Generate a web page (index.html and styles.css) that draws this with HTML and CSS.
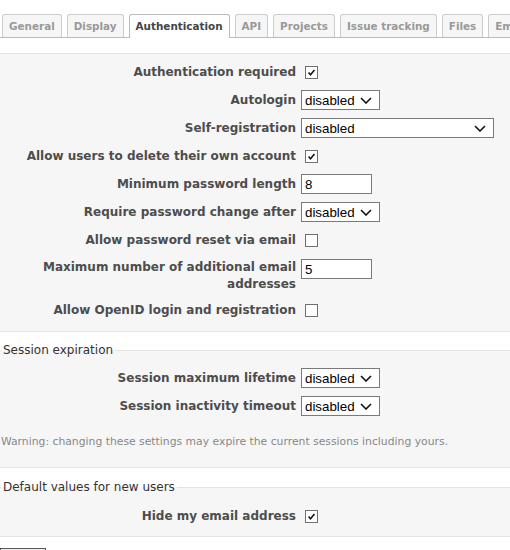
FILE: index.html
```html
<!DOCTYPE html>
<html lang="en">
    <head>
        <title>Settings - Authentication</title>
        <meta charset="utf-8" />
        <link rel="stylesheet" href="styles.css">
    </head>
    <body>
        <div class="tabs">
            <ul>
                <li><a href="#">General</a></li>
                <li><a href="#">Display</a></li>
                <li><a href="#" class="selected">Authentication</a></li>
                <li><a href="#">API</a></li>
                <li><a href="#">Projects</a></li>
                <li><a href="#">Issue tracking</a></li>
                <li><a href="#">Files</a></li>
                <li><a href="#">Email notifications</a></li>
            </ul>
        </div>

        <form class="settings">
            <div class="box">
                <p class="row"><label>Authentication required</label>
                    <span class="cb"><svg viewBox="0 0 13 13"><path d="M3 6.5 L5.3 9.2 L10 3.5" /></svg></span></p>
                <p class="row"><label>Autologin</label>
                    <span class="sel"><select><option>disabled</option></select><svg viewBox="0 0 12 7"><path d="M1 1 L6 6 L11 1" /></svg></span></p>
                <p class="row"><label>Self-registration</label>
                    <span class="sel wide"><select><option>disabled</option></select><svg viewBox="0 0 12 7"><path d="M1 1 L6 6 L11 1" /></svg></span></p>
                <p class="row"><label>Allow users to delete their own account</label>
                    <span class="cb"><svg viewBox="0 0 13 13"><path d="M3 6.5 L5.3 9.2 L10 3.5" /></svg></span></p>
                <p class="row"><label>Minimum password length</label>
                    <input type="text" class="txt" value="8"></p>
                <p class="row"><label>Require password change after</label>
                    <span class="sel"><select><option>disabled</option></select><svg viewBox="0 0 12 7"><path d="M1 1 L6 6 L11 1" /></svg></span></p>
                <p class="row"><label>Allow password reset via email</label>
                    <span class="cb off"></span></p>
                <p class="row tall"><label>Maximum number of additional email addresses</label>
                    <input type="text" class="txt" value="5"></p>
                <p class="row"><label>Allow OpenID login and registration</label>
                    <span class="cb off"></span></p>
            </div>

            <fieldset class="box">
                <legend>Session expiration</legend>
                <p class="row"><label>Session maximum lifetime</label>
                    <span class="sel"><select><option>disabled</option></select><svg viewBox="0 0 12 7"><path d="M1 1 L6 6 L11 1" /></svg></span></p>
                <p class="row"><label>Session inactivity timeout</label>
                    <span class="sel"><select><option>disabled</option></select><svg viewBox="0 0 12 7"><path d="M1 1 L6 6 L11 1" /></svg></span></p>
                <p class="info">Warning: changing these settings may expire the current sessions including yours.</p>
            </fieldset>

            <fieldset class="box last">
                <legend>Default values for new users</legend>
                <p class="row"><label>Hide my email address</label>
                    <span class="cb"><svg viewBox="0 0 13 13"><path d="M3 6.5 L5.3 9.2 L10 3.5" /></svg></span></p>
            </fieldset>

            <input type="button" class="save" value="Save">
        </form>
    </body>
</html>
```

FILE: styles.css
```css
html {
    overflow: hidden;
}
body {
    margin: 0;
    padding: 0;
    font-family: "DejaVu Sans", Verdana, sans-serif;
    font-size: 12px;
    color: #4d4d4d;
    background-color: #fff;
}

/* Tabs */
.tabs {
    padding-top: 14px;
    overflow: hidden;
}
.tabs ul {
    display: flex;
    align-items: flex-end;
    gap: 5px;
    margin: 0;
    padding: 0 0 0 2px;
    list-style: none;
    border-bottom: 1px solid #bbb;
    white-space: nowrap;
}
.tabs li {
    flex: none;
}
.tabs a {
    display: block;
    height: 23px;
    box-sizing: border-box;
    padding: 5px 6px 0 6px;
    line-height: 13px;
    font-size: 10.4px;
    font-weight: bold;
    color: #999;
    text-decoration: none;
    background-color: #f6f6f6;
    border: 1px solid #ccc;
    border-bottom: none;
    border-radius: 3px 3px 0 0;
}
.tabs a.selected {
    height: 24px;
    margin-bottom: -1px;
    color: #444;
    background-color: #fff;
    border-color: #bbb;
}

/* Boxes */
.settings {
    margin-top: 15px;
}
.box {
    margin: 0;
    padding: 4px 0 7px 0;
    background-color: #f6f6f6;
    border: 1px solid #e4e4e4;
    border-left: none;
    border-right: none;
}
fieldset.box {
    min-width: 0;
    margin-top: 10px;
    padding: 6px 0 16px 0;
}
fieldset.last {
    margin-top: 11px;
    padding-top: 7px;
    padding-bottom: 6px;
}
legend {
    margin-left: 1px;
    padding: 0 2px;
    line-height: 16px;
    font-size: 12px;
    color: #333;
}

/* Rows */
.row {
    display: flex;
    align-items: center;
    height: 28px;
    margin: 0;
}
.row.tall {
    align-items: flex-start;
    height: 42px;
    box-sizing: border-box;
    padding-top: 5px;
}
.row label {
    flex: none;
    width: 296px;
    margin-right: 5px;
    text-align: right;
    font-weight: bold;
    line-height: 17px;
}

.cb {
    display: block;
    width: 13px;
    height: 13px;
    box-sizing: border-box;
    margin-left: 4px;
    background-color: #fff;
    border: 1px solid #707070;
}
.cb svg {
    display: block;
    width: 11px;
    height: 11px;
    fill: none;
    stroke: #111;
    stroke-width: 1.8;
}

.sel {
    position: relative;
    display: block;
}
.sel select {
    display: block;
    -webkit-appearance: none;
    appearance: none;
    width: 79px;
    height: 20px;
    margin: 0;
    padding: 0 0 0 3px;
    font-family: "Liberation Sans", Arial, sans-serif;
    font-size: 13.33px;
    color: #000;
    background-color: #fff;
    border: 1px solid #7a7a7a;
    border-radius: 0;
}
.sel.wide select {
    width: 193px;
}
.sel svg {
    position: absolute;
    right: 8px;
    top: 7px;
    width: 12px;
    height: 7px;
    fill: none;
    stroke: #111;
    stroke-width: 1.6;
}

.txt {
    width: 71px;
    height: 20px;
    box-sizing: border-box;
    margin: 0;
    padding: 0 3px;
    font-family: "Liberation Sans", Arial, sans-serif;
    font-size: 13.33px;
    color: #000;
    background-color: #fff;
    border: 1px solid #7a7a7a;
}

.info {
    margin: 13px 0 0 0;
    padding-left: 1px;
    line-height: 18px;
    font-size: 10.8px;
    color: #888;
}

.save {
    display: block;
    margin: 11px 0 0 0;
    width: 46px;
    height: 22px;
    font-size: 12px;
    background-color: #f2f2f2;
    border: 1px solid #555;
}
```
